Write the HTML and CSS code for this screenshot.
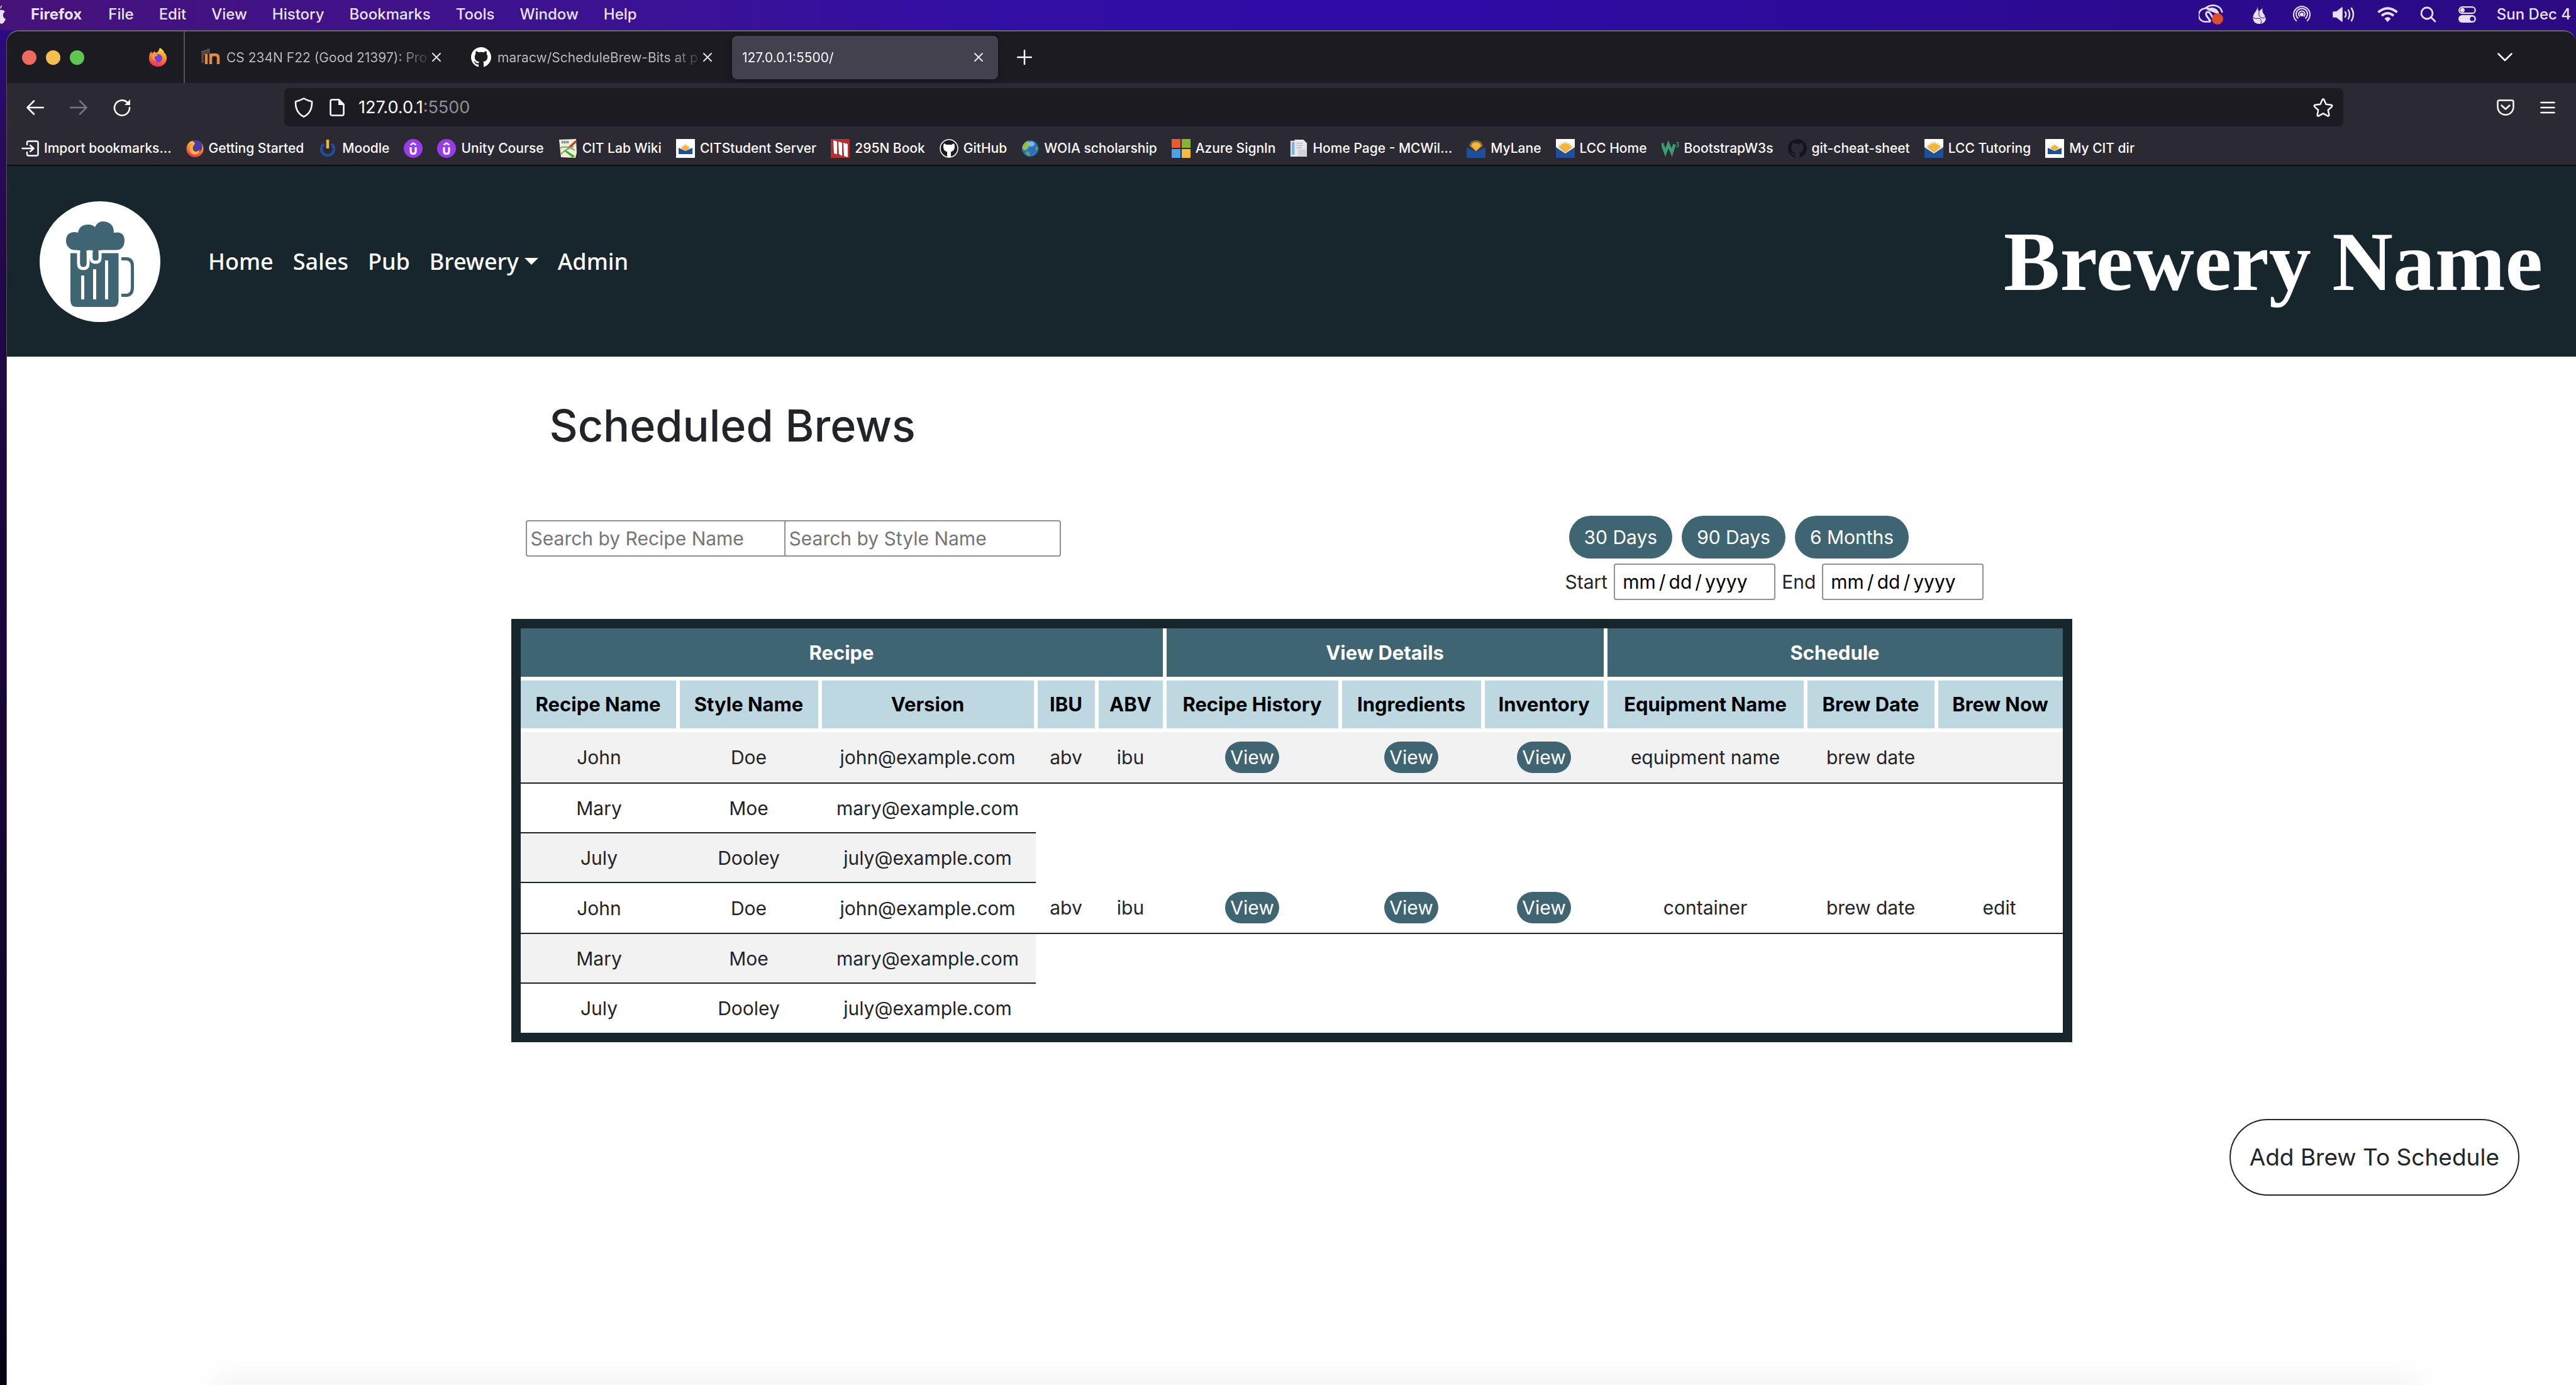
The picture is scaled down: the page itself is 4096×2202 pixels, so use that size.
FILE: index.html
```html
<!DOCTYPE html>
<html lang="en">
<head>
<meta charset="utf-8">
<title>Scheduled Brews</title>
<link rel="stylesheet" href="styles.css">
</head>
<body>
<svg class="defs" aria-hidden="true">
  <symbol id="octocat" viewBox="0 0 16 16"><path d="M8 0C3.58 0 0 3.58 0 8c0 3.54 2.29 6.53 5.47 7.59.4.07.55-.17.55-.38 0-.19-.01-.82-.01-1.49-2.01.37-2.53-.49-2.69-.94-.09-.23-.48-.94-.82-1.13-.28-.15-.68-.52-.01-.53.63-.01 1.08.58 1.23.82.72 1.21 1.87.87 2.33.66.07-.52.28-.87.51-1.07-1.78-.2-3.64-.89-3.64-3.95 0-.87.31-1.59.82-2.15-.08-.2-.36-1.02.08-2.12 0 0 .67-.21 2.2.82.64-.18 1.32-.27 2-.27.68 0 1.36.09 2 .27 1.53-1.04 2.2-.82 2.2-.82.44 1.1.16 1.92.08 2.12.51.56.82 1.27.82 2.15 0 3.07-1.87 3.75-3.65 3.95.29.25.54.73.54 1.48 0 1.07-.01 1.93-.01 2.2 0 .21.15.46.55.38A8.013 8.013 0 0016 8c0-4.42-3.58-8-8-8z"/></symbol>
  <symbol id="close" viewBox="0 0 16 16"><path d="M2 2L14 14M14 2L2 14" stroke="currentColor" stroke-width="2" stroke-linecap="round"/></symbol>
  <symbol id="udemy" viewBox="0 0 30 30"><circle cx="15" cy="15" r="15" fill="#9a3bea"/><path d="M10.500 9.500L15 6.500L19.500 9.500" fill="none" stroke="#fff" stroke-width="2.600"/><path d="M11 13V19.500Q11 23.500 15 23.500T19 19.500V13" fill="none" stroke="#fff" stroke-width="3.200"/></symbol>
  <symbol id="lcc" viewBox="0 0 30 30"><rect width="30" height="30" fill="#fff"/><path d="M0 13L15 23L30 13V30H0Z" fill="#1f4f98"/><path d="M15 22L5 14L3 12L7 12L4 9L9 10L8 6L11.500 8.500L12 4.500L14 8L15 3L16 8L18 4.500L18.500 8.500L22 6L21 10L26 9L23 12L27 12L25 14Z" fill="#f3b53c"/></symbol>
  <symbol id="cit" viewBox="0 0 30 30"><rect width="30" height="30" fill="#fff"/><path d="M4 14L15 19L26 14V24H4Z" fill="#1f4f98"/><path d="M15 19L8 14.500L9 12.500L11 12.500L10.500 10L13 11L15 8L17 11L19.500 10L19 12.500L21 12.500L22 14.500Z" fill="#f3b53c"/></symbol>
</svg>

<header class="menubar">
  <svg class="apple" width="10" height="30" viewBox="0 0 10 30"><path d="M0 8Q4 7 8 10Q4 14 5 18Q6 21 9 22Q7 28 3 30L0 29ZM0 5Q1 1 3 0Q3 4 0 6Z" fill="#e8e0f0"/></svg>
  <nav class="menus">
    <a class="app" href="#">Firefox</a><a href="#">File</a><a href="#">Edit</a><a href="#">View</a><a href="#">History</a><a href="#">Bookmarks</a><a href="#">Tools</a><a href="#">Window</a><a href="#">Help</a>
  </nav>
  <div class="status">
    <svg class="s-cc" width="40" height="32" viewBox="0 0 40 32" fill="none" stroke="#e8e0f0" stroke-width="2.500"><path d="M19 27.500H12A10.500 10.500 0 0 1 9 6.500Q13 5.500 16 6.500M10 6.500Q16 1.500 23 1.500Q35 2 37.500 13"/><path d="M19 27L12.500 18Q10.500 12.500 14 12Q17 11.500 19.500 16L23 22" stroke-width="3"/><path d="M15 8Q22 4 28 9Q31 12 31 14Q24 12 20 10Z" fill="#e8e0f0"/><circle cx="30" cy="23" r="9" fill="#dc4e28" stroke="none"/></svg>
    <svg class="s-flame" width="21" height="32" viewBox="0 0 21 32"><path d="M8 0Q7 8 10 12Q12 8 16 6Q14 12 18 16Q22 21 20 26Q17 31 11 31Q3 31 1 25Q-1 18 4 12Q8 7 8 0Z" fill="#e8e0f0"/><path d="M10 12Q9 19 13 21Q18 23 20 19M1 21Q5 24 10 22Q15 24 13 31" fill="none" stroke="#2c0a88" stroke-width="1"/></svg>
    <svg class="s-air" width="28" height="28" viewBox="0 0 28 28" fill="none" stroke="#e8e0f0" stroke-width="2"><path d="M6 24.500A13 13 0 1 1 22 24.500M8.500 20.500A9 9 0 1 1 19.500 20.500M11 17.500A5 5 0 1 1 17 17.500"/><circle cx="14" cy="14" r="2" fill="#e8e0f0"/></svg>
    <svg class="s-vol" width="36" height="26" viewBox="0 0 36 26" fill="none" stroke="#e8e0f0" stroke-width="2.500" stroke-linecap="round"><path d="M1 9H6L15 2V24L6 17H1Z" fill="#e8e0f0" stroke-width="1.500" stroke-linejoin="round"/><path d="M20 9Q22.500 13 20 17M25 6Q29 13 25 20M30 3Q36 13 30 23"/></svg>
    <svg class="s-wifi" width="33" height="24" viewBox="0 0 33 24" fill="none" stroke="#e8e0f0" stroke-width="4"><path d="M1.500 8.500Q16.500 -4 31.500 8.500M7 14Q16.500 6 26 14"/><path d="M11.500 18.500Q16.500 14 21.500 18.500L16.500 24Z" fill="#e8e0f0" stroke="none"/></svg>
    <svg class="s-search" width="26" height="26" viewBox="0 0 26 26" fill="none" stroke="#e8e0f0" stroke-width="2.800" stroke-linecap="round"><circle cx="11" cy="11" r="9"/><path d="M17.500 17.500L24 24"/></svg>
    <svg class="s-cc2" width="28" height="26" viewBox="0 0 28 26"><rect x="1.200" y="1.200" width="25.600" height="10" rx="5" fill="none" stroke="#e8e0f0" stroke-width="2.200"/><circle cx="6.500" cy="6.200" r="3.400" fill="#e8e0f0"/><rect y="14" width="28" height="12" rx="6" fill="#e8e0f0"/><circle cx="22" cy="20" r="3.600" fill="#2c0a88"/></svg>
    <span>Sun Dec 4</span>
  </div>
</header>

<div class="desktop">
<div class="window">
  <div class="tabbar">
    <div class="lights"><i class="red"></i><i class="amber"></i><i class="green"></i></div>
    <a class="pinned" href="#" aria-label="Firefox">
      <svg width="30" height="30" viewBox="0 0 30 30"><defs><linearGradient id="fx" x1="0.700" y1="0" x2="0.400" y2="1"><stop offset="0" stop-color="#ffe64a"/><stop offset="0.450" stop-color="#ff8f2c"/><stop offset="1" stop-color="#ef2a5c"/></linearGradient></defs><path d="M18 0Q24 3 25 8Q29 10 29 17A14 13 0 0 1 1 17Q1 10 4 6L6 9L10 5L11 8Q16 8 18 0Z" fill="url(#fx)"/><circle cx="15.500" cy="16.500" r="6.500" fill="#6f3fe0"/><path d="M5 12Q10 8 15 12Q12 14 10 14Q9 18 13 21Q6 21 5 12Z" fill="#ff9a2e"/></svg>
    </a>
    <div class="tabs">
      <div class="tab">
        <svg class="fav" width="32" height="30" viewBox="0 0 32 30"><path d="M2 7L14 3V7L4 10V24" fill="none" stroke="#5b514e" stroke-width="3"/><path d="M10 26V10M17 26V9M17 15Q17 11 23 11T29 15V26" fill="none" stroke="#e08a3c" stroke-width="4.500"/></svg>
        <span class="tab-title">CS 234N F22 (Good 21397): Pro</span>
        <button class="x" aria-label="Close tab"><svg width="16" height="16"><use href="#close"/></svg></button>
      </div>
      <div class="tab">
        <svg class="fav" width="32" height="32" fill="#fff"><use href="#octocat"/></svg>
        <span class="tab-title">maracw/ScheduleBrew-Bits at p</span>
        <button class="x" aria-label="Close tab"><svg width="16" height="16"><use href="#close"/></svg></button>
      </div>
      <div class="tab active">
        <span class="tab-title">127.0.0.1:5500/</span>
        <button class="x" aria-label="Close tab"><svg width="16" height="16"><use href="#close"/></svg></button>
      </div>
    </div>
    <button class="newtab" aria-label="New tab"><svg width="24" height="24" viewBox="0 0 24 24"><path d="M12 1V23M1 12H23" stroke="#fbfbfe" stroke-width="2.500" stroke-linecap="round"/></svg></button>
    <button class="alltabs" aria-label="List all tabs"><svg width="24" height="14" viewBox="0 0 24 14"><path d="M1.500 1.500L12 12L22.500 1.500" fill="none" stroke="#fbfbfe" stroke-width="2.500" stroke-linecap="round" stroke-linejoin="round"/></svg></button>
  </div>

  <div class="toolbar">
    <button aria-label="Back"><svg width="28" height="24" viewBox="0 0 28 24" fill="none" stroke="#fbfbfe" stroke-width="2.500" stroke-linecap="round" stroke-linejoin="round"><path d="M27 12H2M12 1.500L1.500 12L12 22.500"/></svg></button>
    <button aria-label="Forward"><svg width="28" height="24" viewBox="0 0 28 24" fill="none" stroke="#77767f" stroke-width="2.500" stroke-linecap="round" stroke-linejoin="round"><path d="M1 12H26M16 1.500L26.500 12L16 22.500"/></svg></button>
    <button aria-label="Reload"><svg width="28" height="28" viewBox="0 0 28 28"><path d="M26 14A12 12 0 1 1 22 5.500" fill="none" stroke="#fbfbfe" stroke-width="2.600" stroke-linecap="round"/><path d="M27 1V10H18Z" fill="#fbfbfe"/></svg></button>
    <div class="urlbar">
      <svg width="30" height="32" viewBox="0 0 30 32"><path d="M15 1.500Q21 5 28 6.500Q28.500 24 15 30.500Q1.500 24 2 6.500Q9 5 15 1.500Z" fill="none" stroke="#fbfbfe" stroke-width="2.600" stroke-linejoin="round"/></svg>
      <svg class="page" width="24" height="28" viewBox="0 0 24 28"><path d="M4 1.500H15L22.500 9V24Q22.500 26.500 20 26.500H4Q1.500 26.500 1.500 24V4Q1.500 1.500 4 1.500Z" fill="none" stroke="#fbfbfe" stroke-width="2.600" stroke-linejoin="round"/><path d="M14 1V10H23Z" fill="#fbfbfe"/></svg>
      <span class="url">127.0.0.1<span>:5500</span></span>
      <svg class="star" width="32" height="30" viewBox="0 0 32 30"><path d="M16 1.500Q17 1.500 17.500 2.800L20.500 9.800L28.500 10.700Q31.500 11.500 29.500 13.800L23.800 19L25.300 26.500Q25.300 29 22.800 28.200L16 24.300L9.200 28.200Q6.700 29 6.700 26.500L8.200 19L2.500 13.800Q.5 11.500 3.500 10.700L11.500 9.800L14.500 2.800Q15 1.500 16 1.500Z" fill="none" stroke="#fbfbfe" stroke-width="2.500" stroke-linejoin="round"/></svg>
    </div>
    <button class="pocket" aria-label="Save to Pocket"><svg width="28" height="26" viewBox="0 0 28 26" fill="none" stroke="#fbfbfe" stroke-width="2.500" stroke-linecap="round" stroke-linejoin="round"><path d="M4 1.500H24Q26.500 1.500 26.500 4V12A12.500 12.500 0 0 1 1.500 12V4Q1.500 1.500 4 1.500Z"/><path d="M7.500 9.500L14 15.500L20.500 9.500"/></svg></button>
    <button class="menu" aria-label="Menu"><svg width="24" height="20" viewBox="0 0 24 20"><path d="M1.500 2H22.500M1.500 10H22.500M1.500 18H22.500" stroke="#fbfbfe" stroke-width="2.600" stroke-linecap="round"/></svg></button>
  </div>

  <nav class="bookmarks">
    <a href="#"><svg width="28" height="26" viewBox="0 0 28 26" fill="none" stroke="#fbfbfe" stroke-width="2.500" stroke-linecap="round" stroke-linejoin="round"><path d="M9 7V4Q9 1.500 11.500 1.500H24Q26.500 1.500 26.500 4V22Q26.500 24.500 24 24.500H11.500Q9 24.500 9 22V19M1.500 13H18M14 8L19.500 13L14 18"/></svg>Import bookmarks...</a>
    <a href="#"><svg width="28" height="30" viewBox="0 0 28 30"><circle cx="14" cy="15.500" r="13.500" fill="url(#fx)"/><path d="M8 3Q16 -1 23 5Q28 11 24 18Q20 23 13 20Q8 15 13 9Q16 5 8 3Z" fill="#4b3aa0"/><path d="M13 7Q8 14 12 19Q17 22 21 17Q21 25 13 25Q5 23 5 15Q6 9 13 7Z" fill="#ffb13d"/></svg>Getting Started</a>
    <a href="#"><svg width="30" height="28" viewBox="-2 0 30 28"><path d="M7 7A10 10 0 1 0 19 7" fill="none" stroke="#1f4f98" stroke-width="4.500"/><path d="M13 0V14" stroke="#f3b53c" stroke-width="4.500"/></svg>Moodle</a>
    <a href="#" aria-label="Udemy"><svg width="30" height="30"><use href="#udemy"/></svg></a>
    <a href="#"><svg width="30" height="30"><use href="#udemy"/></svg>Unity Course</a>
    <a href="#"><svg width="30" height="30" viewBox="0 0 30 30"><path d="M1 1L28 0L29 22L27 30L4 29Z" fill="#f3efd6"/><path d="M5 5H17" stroke="#6b7a9a" stroke-width="4" stroke-dasharray="2 1"/><path d="M27 2L15 13L13 18L18 15L29 5Z" fill="#c8402a"/><path d="M3 14Q14 10 26 18M4 24Q14 14 24 12" stroke="#76b06c" stroke-width="2" fill="none"/><path d="M8 18L12 18L26 27L23 30Z" fill="#3fa63c"/></svg>CIT Lab Wiki</a>
    <a href="#"><svg width="30" height="30"><use href="#cit"/></svg>CITStudent Server</a>
    <a href="#"><svg width="30" height="30" viewBox="0 0 30 30"><rect width="30" height="30" fill="#b4312f"/><path d="M4 2L10 4V24L5 23ZM12 4L18 6V27L13 24ZM20 6L27 8V29L21 27Z" fill="#fff"/></svg>295N Book</a>
    <a href="#"><svg width="30" height="30" viewBox="0 0 30 30"><circle cx="15" cy="15" r="14" fill="#1c1b22" stroke="#fff" stroke-width="1.500"/><path d="M7 7L11 9H19L23 7Q25 12 23 17Q21 20 18 20.500V29H12V20.500Q9 20 7 17Q5 12 7 7Z" fill="#fff"/></svg>GitHub</a>
    <a href="#"><svg width="28" height="28" viewBox="0 0 28 28"><circle cx="14" cy="14" r="13" fill="#2c6fc4"/><path d="M10 2Q2 6 1.500 14Q4 18 8 16Q14 12 12 8Q15 4 10 2Z" fill="#8fc04a"/><path d="M6 20Q12 17 14 21Q14 26 12 27Q8 25 6 20ZM22 12Q26 10 27 14Q26 18 23 17Z" fill="#5aa644"/><ellipse cx="16" cy="7" rx="5" ry="4" fill="#a5d3f5" opacity="0.700"/></svg>WOIA scholarship</a>
    <a href="#"><svg width="30" height="30" viewBox="0 0 30 30"><path d="M0 0H14V14H0Z" fill="#e85b30"/><path d="M16 0H30V14H16Z" fill="#84b533"/><path d="M0 16H14V30H0Z" fill="#4aa3ea"/><path d="M16 16H30V30H16Z" fill="#f4bb3c"/></svg>Azure SignIn</a>
    <a href="#"><svg width="28" height="30" viewBox="0 0 30 30"><path d="M1 2H8V0H23L29 6V29H1Z" fill="#e6e8ec"/><path d="M3 4H8V26H3Z" fill="#7fb2d8"/><path d="M11 6H22M11 10H22M11 14H20M16 21H26" stroke="#b5b8be" stroke-width="1.500"/><path d="M14 17H28V28H14Z" fill="#cfd3d8"/></svg>Home Page - MCWil...</a>
    <a href="#"><svg width="30" height="30" viewBox="0 0 30 30"><path d="M0 13L15 20L30 13V30H0Z" fill="#1f4f98"/><path d="M4 11Q6 2 15 2T26 11L15 20Z" fill="#8a6a32"/><path d="M7 11Q9 5 15 5T23 11L15 19Z" fill="#f3b53c"/></svg>MyLane</a>
    <a href="#"><svg width="30" height="30"><use href="#lcc"/></svg>LCC Home</a>
    <a href="#"><svg width="28" height="30" viewBox="1 0 30 30"><path d="M1.500 6L7.500 22L12.500 8L18.500 22L23 8" fill="none" stroke="#3a9d6e" stroke-width="5"/><path d="M26 5H30L28 8Q31 9 29.500 11.500Q28 13 26 11.500" fill="none" stroke="#3a9d6e" stroke-width="1.500"/></svg>BootstrapW3s</a>
    <a href="#"><svg width="30" height="30" fill="#15141a"><use href="#octocat"/></svg>git-cheat-sheet</a>
    <a href="#"><svg width="30" height="30"><use href="#lcc"/></svg>LCC Tutoring</a>
    <a href="#"><svg width="30" height="30"><use href="#cit"/></svg>My CIT dir</a>
  </nav>

  <div class="site">
    <header class="navbar">
      <a class="logo" href="#" aria-label="Brewery home"><svg width="192" height="192" viewBox="0 0 192 192"><circle cx="96" cy="96" r="96" fill="#fff"/><g fill="#3f6573"><path d="M56 78A15 15 0 0 1 42 63Q42 49 56 49Q58 49 61 50Q63 37 78 37Q84 37 88 41Q92 32 101 32Q118 33 118 50Q135 47 135 63Q134 78 120 78Z"/><path d="M49 82H125.500V158Q125.500 168 116 168H59Q49 168 49 158Z"/></g><path d="M49 80H59Q62 80 62 84V99Q62 107 69.500 107T77 99V84Q77 80 79.500 80T82 84V90Q82 97 89 97T96 90V84Q96 80 99 80H126" fill="none" stroke="#fff" stroke-width="5"/><path d="M64.500 76H74.500V99Q74.500 104 69.500 104T64.500 99ZM84.500 76H93.500V90Q93.500 94 89 94T84.500 90Z" fill="#3f6573"/><path d="M68.500 118V156M87.500 108V156M106.500 94V156" stroke="#fff" stroke-width="5"/><path d="M130 91.500H138Q147.500 92 147.500 103V137Q147.500 149 138 149.500H130" fill="none" stroke="#3f6573" stroke-width="5"/></svg></a>
      <nav class="links">
        <a href="#">Home</a><a href="#">Sales</a><a href="#">Pub</a><a class="drop" href="#">Brewery</a><a href="#">Admin</a>
      </nav>
      <div class="brand">Brewery Name</div>
    </header>

    <main>
      <div class="container">
        <h1>Scheduled Brews</h1>
        <div class="filters">
          <div class="search">
            <input type="text" placeholder="Search by Recipe Name" aria-label="Search by Recipe Name">
            <input type="text" placeholder="Search by Style Name" aria-label="Search by Style Name">
          </div>
          <div class="ranges">
            <div class="presets"><button>30 Days</button><button>90 Days</button><button>6 Months</button></div>
            <div class="dates"><label for="start">Start</label><input type="date" id="start"><label for="end">End</label><input type="date" id="end"></div>
          </div>
        </div>
        <div class="frame">
        <table>
          <colgroup><col class="c-recipe"><col class="c-style"><col class="c-version"><col class="c-ibu"><col class="c-abv"><col class="c-history"><col class="c-ingr"><col class="c-inv"><col class="c-equip"><col class="c-date"><col class="c-now"></colgroup>
          <thead>
            <tr class="groups"><th colspan="5">Recipe</th><th colspan="3">View Details</th><th colspan="3">Schedule</th></tr>
            <tr class="heads"><th>Recipe Name</th><th>Style Name</th><th>Version</th><th>IBU</th><th>ABV</th><th>Recipe History</th><th>Ingredients</th><th>Inventory</th><th>Equipment Name</th><th>Brew Date</th><th>Brew Now</th></tr>
          </thead>
          <tbody>
            <tr class="brew first"><td>John</td><td>Doe</td><td>john@example.com</td><td>abv</td><td>ibu</td><td><button>View</button></td><td><button>View</button></td><td><button>View</button></td><td>equipment name</td><td>brew date</td><td></td></tr>
            <tr><td>Mary</td><td>Moe</td><td>mary@example.com</td></tr>
            <tr><td>July</td><td>Dooley</td><td>july@example.com</td></tr>
            <tr class="brew"><td>John</td><td>Doe</td><td>john@example.com</td><td>abv</td><td>ibu</td><td><button>View</button></td><td><button>View</button></td><td><button>View</button></td><td>container</td><td>brew date</td><td>edit</td></tr>
            <tr><td>Mary</td><td>Moe</td><td>mary@example.com</td></tr>
            <tr><td>July</td><td>Dooley</td><td>july@example.com</td></tr>
          </tbody>
        </table>
        </div>
      </div>
      <div class="actions"><button class="add">Add Brew To Schedule</button></div>
    </main>
    <div class="dock-shadow"></div>
  </div>
</div>
</div>
</body>
</html>
```
FILE: styles.css
```css
* { box-sizing: border-box; }
body {
  margin: 0;
  min-height: 100vh;
  display: flex;
  flex-direction: column;
  font-family: Inter, Roboto, sans-serif;
  color: #212529;
}
a { color: inherit; text-decoration: none; }
button { font: inherit; color: inherit; background: none; border: 0; padding: 0; display: flex; align-items: center; justify-content: center; }
svg { display: block; flex: none; }
.defs { position: absolute; width: 0; height: 0; }

/* system menu bar */
.menubar {
  height: 48px;
  padding-bottom: 2px;
  display: flex;
  align-items: center;
  background: linear-gradient(90deg, #46127a 0%, #3b1296 26%, #320ea3 38%, #2e0ca6 55%, #2c0a92 80%, #2b0a82 100%);
  color: #e9e2f2;
  font-size: 24px;
  line-height: 30px;
  font-weight: 500;
  white-space: nowrap;
}
.menus { display: flex; gap: 40px; margin-left: 39px; }
.menus .app { font-weight: 700; margin-right: 2px; }
.status { display: flex; align-items: center; margin-left: auto; padding-right: 8px; }
.s-cc { margin-right: 46px; }
.s-flame { margin-right: 43px; }
.s-air { margin-right: 35px; }
.s-vol { margin-right: 35px; }
.s-wifi { margin-right: 35px; }
.s-search { margin-right: 35px; }
.s-cc2 { margin-right: 33px; }

.desktop {
  flex: 1;
  display: flex;
  padding-left: 10px;
  background: linear-gradient(180deg, #2c0a82 0, #2a0a5c 160px, #210848 400px, #0d0226 1900px, #060114 100%);
}
.window {
  flex: 1;
  min-width: 0;
  display: flex;
  flex-direction: column;
  border-top: 2px solid #68676b;
  border-left: 1px solid #55545a;
  border-radius: 20px 20px 0 0;
  overflow: hidden;
  background: #2b2a33;
}

/* browser tabs */
.tabbar { height: 82px; display: flex; align-items: center; background: #1c1b22; }
.lights { display: flex; gap: 15px; padding-left: 24px; }
.lights i { width: 23px; height: 23px; border-radius: 50%; }
.red { background: #ed6a5e; }
.amber { background: #f5bf4f; }
.green { background: #61c554; }
.pinned { margin-left: 102px; padding-right: 26px; height: 100%; display: flex; align-items: center; border-right: 2px solid #55545a; }
.tabs { display: flex; gap: 8px; padding-left: 8px; }
.tab {
  width: 423px;
  height: 69px;
  padding: 0 23px 0 16px;
  display: flex;
  align-items: center;
  gap: 10px;
  border-radius: 8px;
  color: #b9b8be;
  font-size: 21px;
}
.tab-title {
  flex: 1;
  white-space: nowrap;
  -webkit-mask-image: linear-gradient(90deg, #000 85%, transparent 102%);
  mask-image: linear-gradient(90deg, #000 85%, transparent 102%);
}
.tab .x { margin-left: -5px; color: #e6e5ea; }
.tab.active { background: #42414d; color: #fbfbfe; box-shadow: 0 0 6px rgba(0, 0, 0, .4); }
.newtab { margin-left: 30px; }
.alltabs { margin-left: auto; margin-right: 101px; }

/* navigation toolbar */
.toolbar { height: 77px; padding: 8px 33px 8px 31px; display: flex; align-items: center; gap: 41px; }
.urlbar {
  flex: 1;
  height: 61px;
  margin-left: 203px;
  padding: 0 16px;
  display: flex;
  align-items: center;
  border-radius: 8px;
  background: #1c1b22;
}
.urlbar .page { margin: 0 22px 0 26px; }
.url { font-size: 27px; color: #fbfbfe; }
.url span { color: #8f8e96; }
.star { margin-left: auto; }
.pocket { margin-left: 203px; }

.bookmarks {
  height: 55px;
  padding-left: 23px;
  display: flex;
  align-items: center;
  gap: 23px;
  border-bottom: 2px solid #0c0c0f;
  color: #fbfbfe;
  font-size: 21px;
  font-weight: 500;
  white-space: nowrap;
}
.bookmarks a { display: flex; align-items: center; gap: 8px; }

/* site */
.site { flex: 1; position: relative; overflow: hidden; background: #fff; }
.navbar {
  height: 303px;
  padding: 0 53px 0 52px;
  display: flex;
  align-items: center;
  background: #17252c;
  color: #fff;
}
.links {
  display: flex;
  gap: 31px;
  margin-left: 76px;
  font-family: "Noto Sans", "Open Sans", sans-serif;
  font-size: 36px;
  font-weight: 500;
}
.drop { display: flex; align-items: center; gap: 9px; }
.drop::after { content: ""; border: 11px solid transparent; border-top-color: #fff; border-bottom: 0; }
.brand { margin-left: auto; font: bold 134px/160px "Liberation Serif", serif; }

main { font-size: 30px; line-height: 46px; }
.container { width: 2482px; max-width: 100%; margin: 0 auto; }
h1 { margin: 0; padding: 64px 0 97px 61px; font-size: 70px; line-height: 92px; font-weight: 500; }
.filters { display: grid; grid-template-columns: 1674px auto; align-items: start; margin-bottom: 30px; }
.search { display: flex; padding: 7px 0 0 23px; }
input {
  height: 58px;
  border: 2px solid #8f8f9d;
  border-radius: 4px;
  background: #fff;
  font: inherit;
  color: #000;
  padding: 0 6px;
}
input::placeholder { color: #757575; opacity: 1; }
.search input { width: 440px; }
.search input:first-child { margin-right: -29px; }
.presets { display: flex; gap: 15px; padding-left: 8px; }
.presets button { height: 68px; padding: 0 24px; border-radius: 34px; background: #3f6573; color: #fff; }
.dates { display: flex; align-items: center; gap: 10px; margin-top: 8px; padding-left: 2px; }
.dates input { width: 257px; padding: 0 12px; }
input::-webkit-calendar-picker-indicator { display: none; }
input::-webkit-datetime-edit-text { padding: 0 5px; }
input::-webkit-datetime-edit-month-field,
input::-webkit-datetime-edit-day-field,
input::-webkit-datetime-edit-year-field { padding: 0; }

.frame { border: 15px solid #17252c; }
table { width: 100%; table-layout: fixed; border-collapse: collapse; text-align: center; }
.c-recipe { width: 250px; }
.c-style { width: 226px; }
.c-version { width: 343px; }
.c-ibu { width: 97px; }
.c-abv { width: 108px; }
.c-history { width: 279px; }
.c-ingr { width: 227px; }
.c-inv { width: 195px; }
.c-equip { width: 318px; }
.c-date { width: 208px; }
.c-now { width: 201px; }
th, td { padding: 0; white-space: nowrap; }
th { border-right: 6px solid #fff; border-bottom: 6px solid #fff; font-size: 31px; font-weight: 700; }
th:last-child { border-right: 0; }
.groups { height: 80px; background: #3f6573; color: #fff; }
.heads { height: 82px; background: #bdd8e0; color: #000; }
tbody tr { height: 79px; }
tbody .brew { height: 81px; }
tbody .first { height: 84px; }
td { border-bottom: 2px solid #17252c; }
tbody tr:last-child td { border-bottom: 0; }
tbody tr:nth-child(odd) td { background: #f2f2f2; }
td button { margin: 0 auto; height: 50px; padding: 0 8px; border-radius: 25px; background: #3f6573; color: #fff; }

.actions { display: flex; justify-content: flex-end; padding: 122px 90px 0 0; }
.add { height: 122px; padding: 0 30px; border: 2px solid #212529; border-radius: 61px; font-size: 37px; }

.dock-shadow { position: absolute; left: 330px; right: 250px; bottom: -20px; height: 20px; box-shadow: 0 0 50px 2px rgba(0, 0, 0, .1); }
```
